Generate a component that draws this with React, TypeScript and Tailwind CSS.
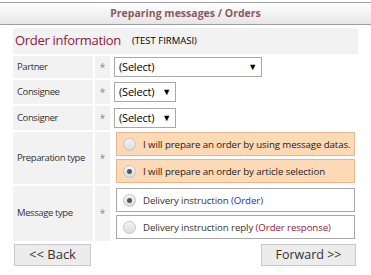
import React from 'react';

const Radio: React.FC<{ checked?: boolean }> = ({ checked }) => (
  <span className="flex h-[13px] w-[13px] shrink-0 items-center justify-center rounded-full border border-[#c4c4c4] bg-gradient-to-b from-[#f4f4f4] to-[#dcdcdc]">
    {checked && <span className="h-[5px] w-[5px] rounded-full bg-[#555]" />}
  </span>
);

const Select: React.FC<{ wide?: boolean }> = ({ wide }) => (
  <div
    className={`flex h-[20px] items-center justify-between border border-[#a9a9a9] bg-white pl-[4px] pr-[4px] text-[11px] tracking-[-0.2px] text-black ${
      wide ? 'w-[148px]' : 'w-[62px]'
    }`}
  >
    <span>(Select)</span>
    <span className="text-[9px]">▼</span>
  </div>
);

const Label: React.FC<{ children: React.ReactNode }> = ({ children }) => (
  <>
    <div className="flex items-center whitespace-nowrap bg-[#f2f2f2] pl-[4px] text-[9.5px] tracking-[-0.4px] text-[#333]">
      {children}
    </div>
    <div className="flex items-center justify-center bg-[#f2f2f2] text-[10px] text-[#888]">*</div>
  </>
);

const optionText = 'whitespace-nowrap pt-[2px] text-[9.7px] tracking-[-0.1px]';

const App: React.FC = () => {
  return (
    <div className="h-[275px] w-[371px] bg-white pt-[2px] font-['Open_Sans',sans-serif]">
      <div className="flex h-[23px] items-center justify-center border-y border-[#9c9ca4] bg-gradient-to-b from-white to-[#e6e6e6] text-[10.5px] font-bold text-[#8b5a60]">
        Preparing messages / Orders
      </div>

      <div className="mx-[13px] mt-[3px] w-[345px]">
        <div className="flex h-[26px] items-center gap-[11px] bg-[#f2f2f2] pl-[2px]">
          <span className="text-[13px] tracking-[-0.3px] text-[#8b1a3e]">Order information</span>
          <span className="text-[9.5px] text-black">(TEST FIRMASI)</span>
        </div>

        <div className="mt-[2px] grid grid-cols-[80px_15px_1fr] grid-rows-[22px_24px_24px_52px_55px] gap-[2px]">
          <Label>Partner</Label>
          <div className="flex items-center pl-[2px]">
            <Select wide />
          </div>

          <Label>Consignee</Label>
          <div className="flex items-center pl-[2px]">
            <Select />
          </div>

          <Label>Consigner</Label>
          <div className="flex items-center pl-[2px]">
            <Select />
          </div>

          <Label>Preparation type</Label>
          <div className="flex flex-col gap-[3px] pl-[4px] pr-[3px]">
            <div className="flex h-[24px] items-center gap-[7px] border border-[#e3b891] bg-[#fdd9b6] pl-[6px] text-[#222]">
              <Radio />
              <span className={optionText}>I will prepare an order by using message datas.</span>
            </div>
            <div className="flex h-[24px] items-center gap-[7px] border border-[#e3b891] bg-[#fdd9b6] pl-[6px] text-[#222]">
              <Radio checked />
              <span className={optionText}>I will prepare an order by article selection</span>
            </div>
          </div>

          <Label>Message type</Label>
          <div className="flex flex-col gap-[3px] pl-[4px] pr-[3px] pt-[2px]">
            <div className="flex h-[24px] items-center gap-[7px] border border-[#a8a8a8] bg-white pl-[6px] text-[#333]">
              <Radio checked />
              <span className={optionText}>
                Delivery instruction <span className="text-[#2a2ac8]">(Order)</span>
              </span>
            </div>
            <div className="flex h-[24px] items-center gap-[7px] border border-[#a8a8a8] bg-white pl-[6px] text-[#333]">
              <Radio />
              <span className={optionText}>
                Delivery instruction reply <span className="text-[#8b1a3e]">(Order response)</span>
              </span>
            </div>
          </div>
        </div>

        <div className="mt-[3px] flex justify-between pl-[1px] pr-[2px]">
          <button className="h-[22px] w-[77px] border border-[#cacaca] bg-[#ececec] text-[13px] text-[#333]">
            &lt;&lt; Back
          </button>
          <button className="h-[22px] w-[95px] border border-[#cacaca] bg-[#ececec] text-[12.5px] text-[#333]">
            Forward &gt;&gt;
          </button>
        </div>
      </div>
    </div>
  );
};

export default App;
